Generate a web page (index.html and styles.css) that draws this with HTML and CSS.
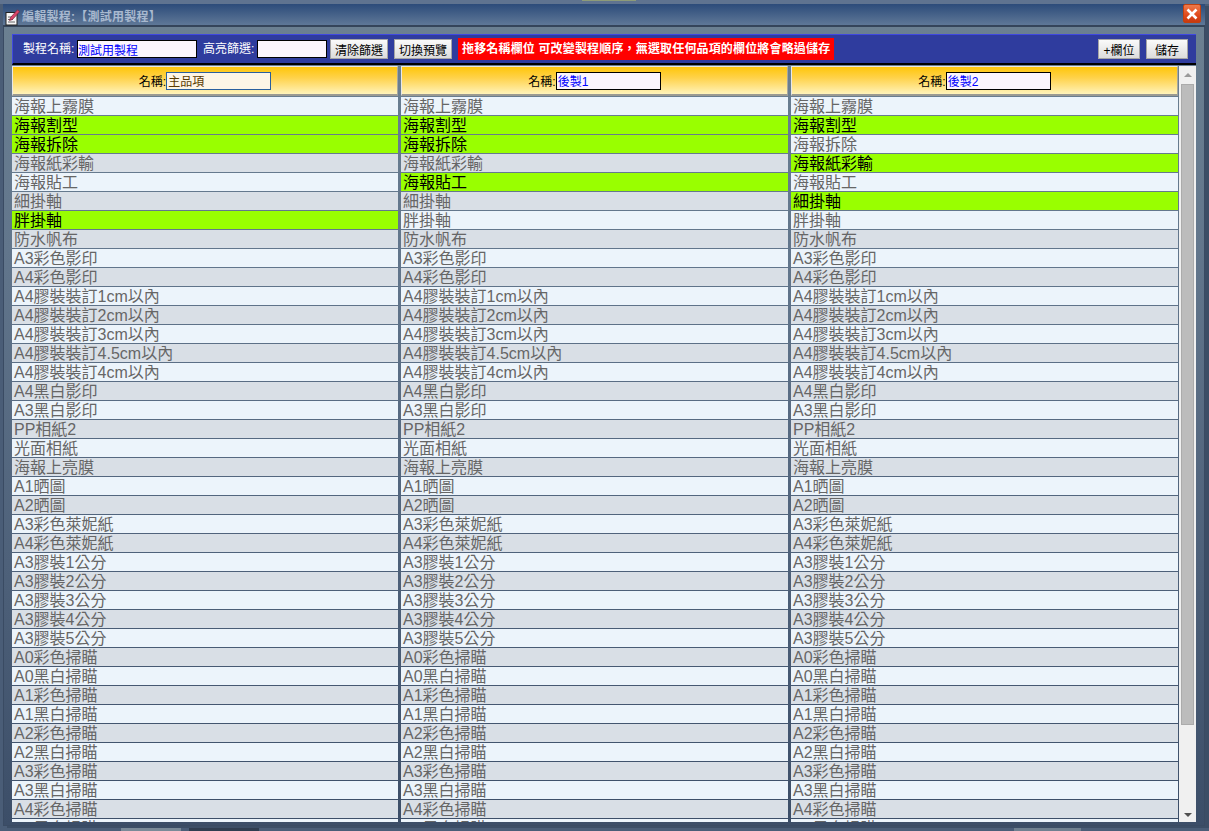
FILE: index.html
```html
<!DOCTYPE html>
<html lang="zh-Hant">
<head>
<meta charset="utf-8">
<title>編輯製程</title>
<link rel="stylesheet" href="styles.css">
</head>
<body>
<div class="page-top"><span class="top-bit"></span></div>
<div class="window">
  <div class="titlebar">
    <svg class="title-icon" width="15" height="17" viewBox="0 0 15 17"><rect x="1" y="3.500" width="11" height="12.500" fill="#f6f6f6" stroke="#222"/><path d="M3 8h4M3 10.500h5M3 13h7" stroke="#666"/><path d="M5.500 8.500 12.500 .8 14.500 2.800 7.500 10.500 4.500 11.500Z" fill="#d8456a" stroke="#7d1f3c" stroke-width=".7"/></svg>
    <span class="title-text">編輯製程:【測試用製程】</span>
    <button class="close" type="button" aria-label="關閉"><svg width="12" height="12" viewBox="0 0 12 12"><path d="M1.500 1.500 10.500 10.500M10.500 1.500 1.500 10.500" stroke="#fff" stroke-width="2.600"/></svg></button>
  </div>
  <div class="toolbar">
    <label class="tool-label label-name">製程名稱:</label>
    <input class="tool-input input-name" value="測試用製程">
    <label class="tool-label label-filter">高亮篩選:</label>
    <input class="tool-input input-filter">
    <button class="btn btn-clear" type="button">清除篩選</button>
    <button class="btn btn-switch" type="button">切換預覽</button>
    <span class="notice">拖移名稱欄位 可改變製程順序，無選取任何品項的欄位將會略過儲存</span>
    <span class="spacer"></span>
    <button class="btn btn-add" type="button">+欄位</button>
    <button class="btn btn-save" type="button">儲存</button>
  </div>
  <div class="content">
    <div class="columns">
      <section class="col">
        <div class="col-head"><span>名稱:</span><input class="head-input focus" value="主品項"></div>
        <div class="rows">
          <div class="row">海報上霧膜</div><div class="row hl">海報割型</div><div class="row hl">海報拆除</div><div class="row">海報紙彩輸</div><div class="row">海報貼工</div><div class="row">細掛軸</div><div class="row hl">胖掛軸</div><div class="row">防水帆布</div><div class="row">A3彩色影印</div><div class="row">A4彩色影印</div>
          <div class="row">A4膠裝裝訂1cm以內</div><div class="row">A4膠裝裝訂2cm以內</div><div class="row">A4膠裝裝訂3cm以內</div><div class="row">A4膠裝裝訂4.5cm以內</div><div class="row">A4膠裝裝訂4cm以內</div><div class="row">A4黑白影印</div><div class="row">A3黑白影印</div><div class="row">PP相紙2</div><div class="row">光面相紙</div><div class="row">海報上亮膜</div>
          <div class="row">A1晒圖</div><div class="row">A2晒圖</div><div class="row">A3彩色萊妮紙</div><div class="row">A4彩色萊妮紙</div><div class="row">A3膠裝1公分</div><div class="row">A3膠裝2公分</div><div class="row">A3膠裝3公分</div><div class="row">A3膠裝4公分</div><div class="row">A3膠裝5公分</div><div class="row">A0彩色掃瞄</div>
          <div class="row">A0黑白掃瞄</div><div class="row">A1彩色掃瞄</div><div class="row">A1黑白掃瞄</div><div class="row">A2彩色掃瞄</div><div class="row">A2黑白掃瞄</div><div class="row">A3彩色掃瞄</div><div class="row">A3黑白掃瞄</div><div class="row">A4彩色掃瞄</div><div class="row">A4黑白掃瞄</div>
        </div>
      </section>
      <section class="col">
        <div class="col-head"><span>名稱:</span><input class="head-input" value="後製1"></div>
        <div class="rows">
          <div class="row">海報上霧膜</div><div class="row hl">海報割型</div><div class="row hl">海報拆除</div><div class="row">海報紙彩輸</div><div class="row hl">海報貼工</div><div class="row">細掛軸</div><div class="row">胖掛軸</div><div class="row">防水帆布</div><div class="row">A3彩色影印</div><div class="row">A4彩色影印</div>
          <div class="row">A4膠裝裝訂1cm以內</div><div class="row">A4膠裝裝訂2cm以內</div><div class="row">A4膠裝裝訂3cm以內</div><div class="row">A4膠裝裝訂4.5cm以內</div><div class="row">A4膠裝裝訂4cm以內</div><div class="row">A4黑白影印</div><div class="row">A3黑白影印</div><div class="row">PP相紙2</div><div class="row">光面相紙</div><div class="row">海報上亮膜</div>
          <div class="row">A1晒圖</div><div class="row">A2晒圖</div><div class="row">A3彩色萊妮紙</div><div class="row">A4彩色萊妮紙</div><div class="row">A3膠裝1公分</div><div class="row">A3膠裝2公分</div><div class="row">A3膠裝3公分</div><div class="row">A3膠裝4公分</div><div class="row">A3膠裝5公分</div><div class="row">A0彩色掃瞄</div>
          <div class="row">A0黑白掃瞄</div><div class="row">A1彩色掃瞄</div><div class="row">A1黑白掃瞄</div><div class="row">A2彩色掃瞄</div><div class="row">A2黑白掃瞄</div><div class="row">A3彩色掃瞄</div><div class="row">A3黑白掃瞄</div><div class="row">A4彩色掃瞄</div><div class="row">A4黑白掃瞄</div>
        </div>
      </section>
      <section class="col">
        <div class="col-head"><span>名稱:</span><input class="head-input" value="後製2"></div>
        <div class="rows">
          <div class="row">海報上霧膜</div><div class="row hl">海報割型</div><div class="row">海報拆除</div><div class="row hl">海報紙彩輸</div><div class="row">海報貼工</div><div class="row hl">細掛軸</div><div class="row">胖掛軸</div><div class="row">防水帆布</div><div class="row">A3彩色影印</div><div class="row">A4彩色影印</div>
          <div class="row">A4膠裝裝訂1cm以內</div><div class="row">A4膠裝裝訂2cm以內</div><div class="row">A4膠裝裝訂3cm以內</div><div class="row">A4膠裝裝訂4.5cm以內</div><div class="row">A4膠裝裝訂4cm以內</div><div class="row">A4黑白影印</div><div class="row">A3黑白影印</div><div class="row">PP相紙2</div><div class="row">光面相紙</div><div class="row">海報上亮膜</div>
          <div class="row">A1晒圖</div><div class="row">A2晒圖</div><div class="row">A3彩色萊妮紙</div><div class="row">A4彩色萊妮紙</div><div class="row">A3膠裝1公分</div><div class="row">A3膠裝2公分</div><div class="row">A3膠裝3公分</div><div class="row">A3膠裝4公分</div><div class="row">A3膠裝5公分</div><div class="row">A0彩色掃瞄</div>
          <div class="row">A0黑白掃瞄</div><div class="row">A1彩色掃瞄</div><div class="row">A1黑白掃瞄</div><div class="row">A2彩色掃瞄</div><div class="row">A2黑白掃瞄</div><div class="row">A3彩色掃瞄</div><div class="row">A3黑白掃瞄</div><div class="row">A4彩色掃瞄</div><div class="row">A4黑白掃瞄</div>
        </div>
      </section>
    </div>
    <div class="scrollbar">
      <span class="arrow arrow-up"></span>
      <span class="thumb"></span>
      <span class="arrow arrow-down"></span>
    </div>
  </div>
</div>
<div class="page-bottom"><span class="bit bit-a"></span><span class="bit bit-b"></span><span class="bit bit-c"></span></div>
</body>
</html>
```
FILE: styles.css
```css
html, body {
  margin: 0;
  padding: 0;
  height: 831px;
  overflow: hidden;
}
body {
  width: 1209px;
  background: #4a5d77;
  font-family: "Liberation Sans", "Noto Sans CJK TC", sans-serif;
  display: flex;
  flex-direction: column;
}
.page-top {
  height: 4px;
  flex: none;
  background: #5f7390;
  display: flex;
  padding-left: 582px;
}
.top-bit {
  width: 54px;
  height: 1px;
  background: #8d9b78;
}
.window {
  flex: none;
  box-sizing: border-box;
  width: 1202px;
  height: 822px;
  margin-left: 3px;
  border: 1px solid #3a4b63;
  border-top: 0;
  background: linear-gradient(180deg, #6c8192 0%, #62768c 30%, #4d6079 70%, #3c4e68 100%);
  box-shadow: 4px 2px 0 #3c4e66;
  display: flex;
  flex-direction: column;
}
.titlebar {
  flex: none;
  height: 21px;
  margin: 0 -1px;
  padding: 0 4px 0 2px;
  display: flex;
  align-items: center;
  background: linear-gradient(180deg, #2c4b7a 0%, #5f7897 100%);
  border-bottom: 2px solid #35455a;
}
.title-icon {
  flex: none;
  margin-top: 5px;
}
.title-text {
  margin: 2px 0 0 2px;
  font-size: 12px;
  font-weight: bold;
  letter-spacing: .25px;
  color: #a9b9cf;
}
.close {
  margin-left: auto;
  width: 18px;
  height: 19px;
  padding: 0;
  border: 1px solid #c2410f;
  border-radius: 2px;
  background: linear-gradient(180deg, #f07a4a 0%, #e04a1c 60%, #c8390e 100%);
  display: flex;
  align-items: center;
  justify-content: center;
  align-self: flex-start;
}
.toolbar {
  flex: none;
  box-sizing: border-box;
  width: 1184px;
  height: 31px;
  margin: 7px 0 1px 8px;
  padding: 3px 8px 0 10px;
  display: flex;
  align-items: flex-start;
  background: #2f3c9e;
  border-top: 1px solid #3f48e0;
  border-left: 1px solid #3f48e0;
  border-bottom: 2px solid #000;
}
.tool-label {
  font-size: 12px;
  line-height: 18px;
  margin-top: 2px;
  color: #fff;
}
.tool-input {
  box-sizing: border-box;
  height: 18px;
  margin-top: 2px;
  padding: 0;
  border: 1px solid #000;
  background: #fbf5fd;
  color: #00f;
  font: 12px "Liberation Sans", "Noto Sans CJK TC", sans-serif;
  outline: 0;
}
.input-name { width: 120px; margin-left: 2.67px; }
.label-filter { margin-left: 6px; }
.input-filter { width: 70px; margin-left: 2.67px; }
.btn {
  box-sizing: border-box;
  height: 20px;
  width: 58px;
  padding: 0;
  margin-top: 1px;
  border: 1px solid #a5a5a5;
  background: linear-gradient(180deg, #fafafa 0%, #dcdcdc 100%);
  color: #000;
  font: 12px "Liberation Sans", "Noto Sans CJK TC", sans-serif;
}
.btn-clear { margin-left: 3px; }
.btn-switch { margin-left: 6px; }
.notice {
  margin-left: 6px;
  height: 22px;
  padding: 0 4px;
  background: #f00;
  color: #fff;
  font-size: 12px;
  font-weight: bold;
  letter-spacing: .16px;
  line-height: 22px;
  white-space: nowrap;
}
.spacer { flex: 1; }
.btn-add, .btn-save { width: 42px; }
.btn-save { margin-left: 6px; }
.content {
  flex: 1;
  min-height: 0;
  margin: 0 0 3px 8px;
  width: 1184px;
  display: flex;
  gap: 1px;
  overflow: hidden;
}
.columns {
  width: 1166px;
  flex: none;
  display: grid;
  grid-template-columns: 386px 387px 387px;
  column-gap: 3px;
  align-content: start;
}
.col {
  min-width: 0;
}
.col-head {
  box-sizing: border-box;
  height: 30px;
  display: flex;
  align-items: center;
  justify-content: center;
  background: linear-gradient(180deg, #ffc60a 0%, #ffd24a 40%, #fff3ba 100%);
  border-top: 1px solid #e8e8e8;
  border-left: 1px solid #e8e8e8;
  border-right: 1px solid #a8a8a0;
  border-bottom: 2px solid #9a9a92;
  font-size: 12px;
  color: #000;
}
.head-input {
  box-sizing: border-box;
  width: 105px;
  height: 18px;
  margin-left: 0;
  padding: 0 1px;
  border: 1px solid #000;
  background: #fbf5fd;
  color: #00f;
  font: 12px "Liberation Sans", "Noto Sans CJK TC", sans-serif;
  outline: 0;
}
.head-input.focus {
  border-color: #2a5f9e;
  background: #fdf5e6;
  color: #5a3a00;
}
.rows {
  margin-top: 1px;
  display: flex;
  flex-direction: column;
  gap: 1px;
}
.row {
  height: 18px;
  padding-left: 2px;
  font-size: 16px;
  line-height: 20px;
  color: #666;
  background: #ecf4fb;
  white-space: nowrap;
  overflow: hidden;
}
.row:nth-child(even) {
  background: #d9dfe6;
}
.row.hl,
.row.hl:nth-child(even) {
  background: #9f0;
  color: #000;
}
.scrollbar {
  flex: none;
  width: 17px;
  box-sizing: border-box;
  padding: 0 2px;
  background: #f0f0f0;
  display: flex;
  flex-direction: column;
  align-items: center;
}
.thumb {
  box-sizing: border-box;
  width: 13px;
  height: 641px;
  margin-top: 7px;
  background: #bcbcbc;
  border: 1px solid #ababab;
}
.arrow {
  width: 0;
  height: 0;
  border-left: 4px solid transparent;
  border-right: 4px solid transparent;
}
.arrow-up {
  margin-top: 7px;
  border-bottom: 4px solid #9a9a9a;
}
.arrow-down {
  margin-top: auto;
  margin-bottom: 5px;
  border-top: 4px solid #505050;
}
.page-bottom {
  flex: 1;
  display: flex;
  align-items: flex-end;
  padding-left: 121px;
}
.bit { height: 3px; }
.bit-a { width: 60px; background: #7a8a98; }
.bit-b { width: 70px; margin-left: 8px; background: #2f3d50; }
.bit-c { width: 67px; margin-left: 755px; background: #6f8090; }
```
